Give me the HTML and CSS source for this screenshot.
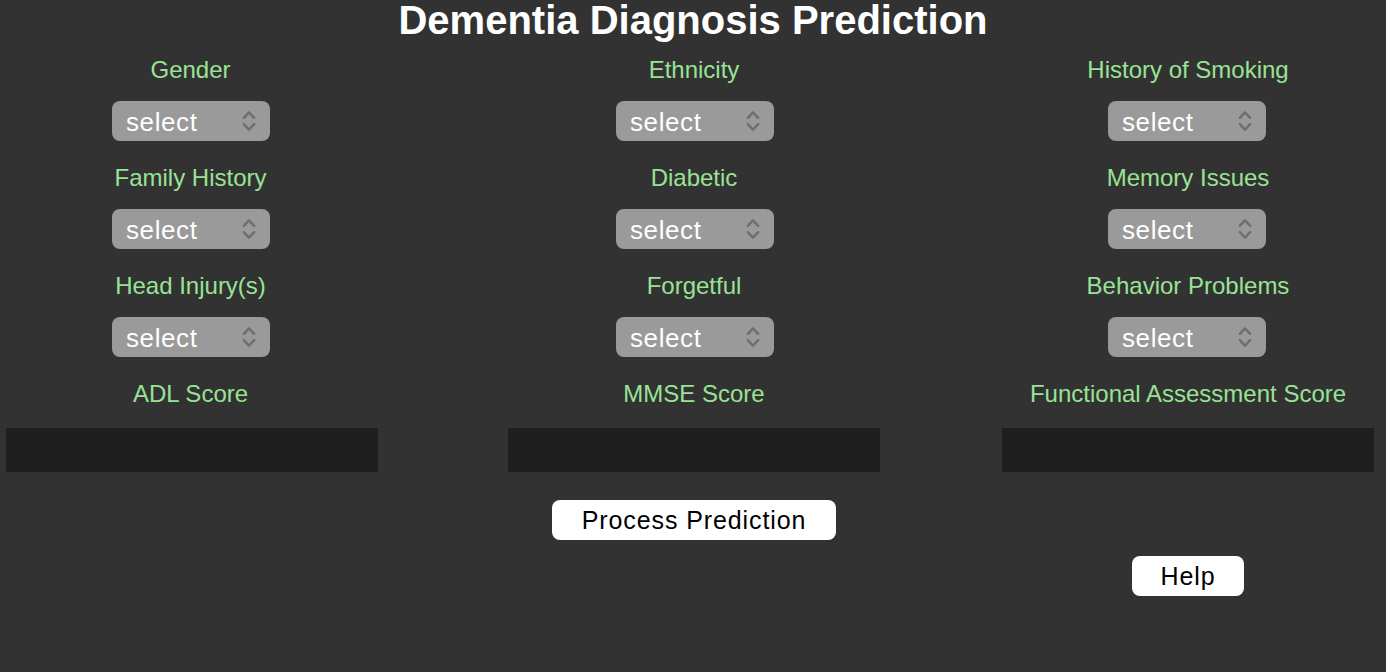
FILE: index.html
```html
<!DOCTYPE html>
<html>
<head>
<meta charset="utf-8">
<link rel="stylesheet" href="styles.css">
</head>
<body>
<h1 class="title">Dementia Diagnosis Prediction</h1>
<div class="form">
  <div class="field c1"><div class="label">Gender</div><div class="select"><span>select</span><svg class="chev" viewBox="0 0 14 22"><path d="M1.8 7.8 L7 2.4 L12.2 7.8 M1.8 14.2 L7 19.6 L12.2 14.2"/></svg></div></div>
  <div class="field c2"><div class="label">Ethnicity</div><div class="select"><span>select</span><svg class="chev" viewBox="0 0 14 22"><path d="M1.8 7.8 L7 2.4 L12.2 7.8 M1.8 14.2 L7 19.6 L12.2 14.2"/></svg></div></div>
  <div class="field c3"><div class="label">History of Smoking</div><div class="select"><span>select</span><svg class="chev" viewBox="0 0 14 22"><path d="M1.8 7.8 L7 2.4 L12.2 7.8 M1.8 14.2 L7 19.6 L12.2 14.2"/></svg></div></div>

  <div class="field c1"><div class="label">Family History</div><div class="select"><span>select</span><svg class="chev" viewBox="0 0 14 22"><path d="M1.8 7.8 L7 2.4 L12.2 7.8 M1.8 14.2 L7 19.6 L12.2 14.2"/></svg></div></div>
  <div class="field c2"><div class="label">Diabetic</div><div class="select"><span>select</span><svg class="chev" viewBox="0 0 14 22"><path d="M1.8 7.8 L7 2.4 L12.2 7.8 M1.8 14.2 L7 19.6 L12.2 14.2"/></svg></div></div>
  <div class="field c3"><div class="label">Memory Issues</div><div class="select"><span>select</span><svg class="chev" viewBox="0 0 14 22"><path d="M1.8 7.8 L7 2.4 L12.2 7.8 M1.8 14.2 L7 19.6 L12.2 14.2"/></svg></div></div>

  <div class="field c1"><div class="label">Head Injury(s)</div><div class="select"><span>select</span><svg class="chev" viewBox="0 0 14 22"><path d="M1.8 7.8 L7 2.4 L12.2 7.8 M1.8 14.2 L7 19.6 L12.2 14.2"/></svg></div></div>
  <div class="field c2"><div class="label">Forgetful</div><div class="select"><span>select</span><svg class="chev" viewBox="0 0 14 22"><path d="M1.8 7.8 L7 2.4 L12.2 7.8 M1.8 14.2 L7 19.6 L12.2 14.2"/></svg></div></div>
  <div class="field c3"><div class="label">Behavior Problems</div><div class="select"><span>select</span><svg class="chev" viewBox="0 0 14 22"><path d="M1.8 7.8 L7 2.4 L12.2 7.8 M1.8 14.2 L7 19.6 L12.2 14.2"/></svg></div></div>

  <div class="field text c1"><div class="label">ADL Score</div><div class="input"></div></div>
  <div class="field text c2"><div class="label">MMSE Score</div><div class="input"></div></div>
  <div class="field text c3"><div class="label">Functional Assessment Score</div><div class="input"></div></div>

  <div class="actions c2"><button class="btn process">Process Prediction</button></div>
  <div class="help c3"><button class="btn helpbtn">Help</button></div>
</div>
</body>
</html>
```
FILE: styles.css
```css
html, body {
  margin: 0;
  padding: 0;
  background: #323232;
  font-family: "Liberation Sans", Arial, sans-serif;
  height: 672px;
  overflow: hidden;
}
.title {
  margin: 0;
  text-align: center;
  color: #ffffff;
  font-size: 40px;
  line-height: 40px;
  font-weight: bold;
}
.form {
  display: grid;
  grid-template-columns: 372px 130px 372px 122px 372px;
  row-gap: 23px;
  padding-left: 6px;
  margin-top: 16px;
}
.c1 { grid-column: 1; }
.c2 { grid-column: 3; }
.c3 { grid-column: 5; }
.field {
  display: flex;
  flex-direction: column;
  align-items: center;
  gap: 17px;
}
.field.text { gap: 20px; }
.label {
  color: #98e394;
  font-size: 24px;
  line-height: 28px;
  white-space: nowrap;
}
.c1 .label { margin-right: 3px; }
.select {
  width: 158px;
  height: 40px;
  box-sizing: border-box;
  background: #9a9a9a;
  border-radius: 8px;
  display: flex;
  align-items: center;
  justify-content: space-between;
  padding: 0 14px 0 14px;
  color: #ffffff;
  font-size: 26px;
  letter-spacing: 0.6px;
}
.c1 .select { margin-right: 2px; }
.c2 .select { margin-left: 2px; }
.c3 .select { margin-right: 2px; }
.select span { margin-top: 3px; }
.chev {
  width: 14px;
  height: 22px;
  fill: none;
  stroke: #6e6e6e;
  stroke-width: 2.4;
  stroke-linecap: round;
  stroke-linejoin: round;
}
.input {
  width: 372px;
  height: 44px;
  background: #1f1f1f;
}
.actions {
  display: flex;
  justify-content: center;
  margin-top: 5px;
}
.help {
  grid-row: 6;
  display: flex;
  justify-content: center;
  margin-top: -7px;
}
.btn {
  background: #ffffff;
  border: none;
  border-radius: 8px;
  height: 40px;
  color: #000000;
  font-family: "Liberation Sans", Arial, sans-serif;
  font-size: 25px;
  letter-spacing: 0.9px;
  padding: 0;
}
.process { width: 284px; }
.helpbtn { width: 112px; }
```
